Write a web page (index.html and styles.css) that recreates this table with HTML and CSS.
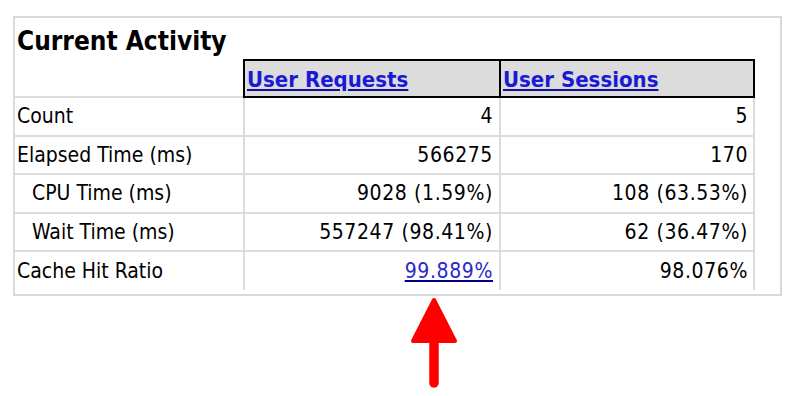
FILE: index.html
```html
<!DOCTYPE html>
<html>
<head>
<meta charset="utf-8">
<link rel="stylesheet" href="styles.css">
</head>
<body>
<div class="panel">
  <div class="title">Current Activity</div>
  <div class="grid">
    <div class="cell blank"></div>
    <div class="cell head head-first"><a href="#">User Requests</a></div>
    <div class="cell head head-last"><a href="#">User Sessions</a></div>

    <div class="cell label">Count</div>
    <div class="cell num">4</div>
    <div class="cell num last-col">5</div>

    <div class="cell label">Elapsed Time (ms)</div>
    <div class="cell num">566275</div>
    <div class="cell num last-col">170</div>

    <div class="cell label indent">CPU Time (ms)</div>
    <div class="cell num">9028 (1.59%)</div>
    <div class="cell num last-col">108 (63.53%)</div>

    <div class="cell label indent">Wait Time (ms)</div>
    <div class="cell num">557247 (98.41%)</div>
    <div class="cell num last-col">62 (36.47%)</div>

    <div class="cell label final">Cache Hit Ratio</div>
    <div class="cell num final"><a class="valuelink" href="#">99.889%</a></div>
    <div class="cell num last-col final">98.076%</div>
  </div>
</div>
<div class="arrow">
  <svg width="60" height="95" viewBox="0 0 60 95">
    <polygon points="29,4 8,45 50,45" fill="#ff0000" stroke="#ff0000" stroke-width="4" stroke-linejoin="round"/>
    <line x1="29" y1="30" x2="29" y2="87" stroke="#ff0000" stroke-width="9.5" stroke-linecap="round"/>
  </svg>
</div>
</body>
</html>
```
FILE: styles.css
```css
html, body {
  margin: 0;
  padding: 0;
  background: #ffffff;
}

body {
  font-family: "DejaVu Sans Condensed", "DejaVu Sans", sans-serif;
  font-stretch: condensed;
  color: #000000;
}

.panel {
  box-sizing: border-box;
  width: 769px;
  margin: 16px 0 0 13px;
  border: 2px solid #dadada;
  padding: 0 0 3px 0;
}

.title {
  height: 41px;
  box-sizing: border-box;
  padding: 8px 0 0 2px;
  font-size: 26px;
  font-weight: bold;
  line-height: 30px;
  color: #000000;
}

.grid {
  display: grid;
  grid-template-columns: 228px 256px 256px;
  grid-auto-rows: 38.5px;
  grid-template-rows: 39px;
}

.cell {
  box-sizing: border-box;
  display: flex;
  align-items: center;
  font-size: 21px;
  border-bottom: 2px solid #dcdcdc;
  white-space: nowrap;
}

.cell.final {
  border-bottom: none;
  height: 38px;
}

.blank {
  border-bottom: 2px solid #dcdcdc;
}

.label {
  padding-left: 2px;
}

.label.indent {
  padding-left: 17px;
}

.num {
  justify-content: flex-end;
  padding-right: 6px;
  border-left: 2px solid #dcdcdc;
  letter-spacing: 0.6px;
}

.num.last-col {
  border-right: 2px solid #dcdcdc;
  padding-right: 5px;
}

.head {
  background: #dcdcdc;
  border-top: 2px solid #000000;
  border-bottom: 2px solid #000000;
  border-right: 2px solid #000000;
  padding-left: 2px;
  padding-top: 1px;
  font-weight: bold;
  font-size: 22px;
  letter-spacing: 0;
}

.head-first {
  border-left: 2px solid #000000;
  border-right: none;
}

.head-last {
  border-left: 2px solid #000000;
}

.head a {
  color: #1a1ad6;
  text-decoration: underline;
  text-decoration-color: #1010a0;
}

.valuelink {
  color: #2a2acc;
  text-decoration: underline;
  text-decoration-color: #00008b;
}

.arrow {
  margin-left: 405px;
  height: 95px;
}

.arrow svg {
  display: block;
}
```
